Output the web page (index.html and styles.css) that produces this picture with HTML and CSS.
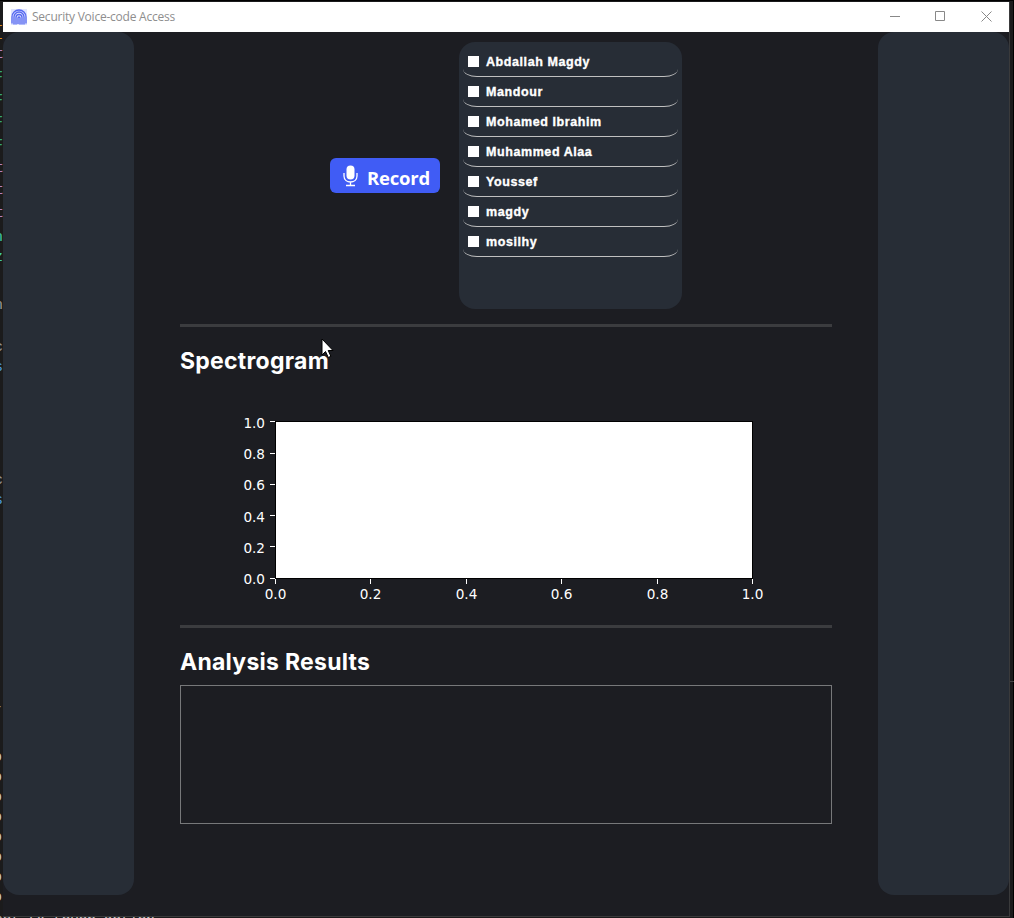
FILE: index.html
```html
<!DOCTYPE html>
<html lang="en">
<head>
<meta charset="utf-8">
<title>Security Voice-code Access</title>
<link rel="stylesheet" href="styles.css">
</head>
<body>
<div class="desktop">
  <svg class="editor" width="1014" height="918">
    <path class="guide" d="M1009 681.5h5"/>
    <g class="code">
      <text class="orange" x="-6" y="36">{</text>
      <text class="purple" x="-5" y="58">t</text>
      <text class="green" x="-6" y="81">F</text>
      <text class="green" x="-6" y="104">F</text>
      <text class="green" x="-6" y="126">F</text>
      <text class="green" x="-6" y="149">F</text>
      <text class="purple" x="-5" y="172">t</text>
      <text class="purple" x="-5" y="194">t</text>
      <text class="purple" x="-5" y="217">t</text>
      <text class="teal" x="-6" y="241">n</text>
      <text class="teal" x="-6" y="261">z</text>
      <text class="grey" x="-6" y="309">n</text>
      <text class="grey" x="-6" y="351">c</text>
      <text class="blue" x="-6" y="371">s</text>
      <text class="grey" x="-6" y="484">c</text>
      <text class="blue" x="-6" y="504">s</text>
      <text class="grey" x="-6" y="711">-</text>
      <text class="light" x="-7" y="761">o</text>
      <text class="light" x="-7" y="781">o</text>
      <text class="light" x="-7" y="801">o</text>
      <text class="light" x="-7" y="821">o</text>
      <text class="light" x="-7" y="841">o</text>
      <text class="light" x="-7" y="861">o</text>
      <text class="light" x="-7" y="881">o</text>
      <text class="light" x="-7" y="901">o</text>
      <text class="light" x="-6" y="924" textLength="161">set tx touch-action</text>
    </g>
  </svg>

  <div class="window">
    <header class="titlebar">
      <svg class="app-icon" width="16" height="16" viewBox="0 0 16 16">
        <path d="M1 14.5V8a7 7 0 0 1 14 0v6.500M3 15.500V8a5 5 0 0 1 10 0v7.500M5 15.500V8.500a3 3 0 0 1 6 0v7M7 15V9a1 1 0 0 1 2 0v6.500"/>
      </svg>
      <span class="title">Security Voice-code Access</span>
      <div class="controls">
        <svg width="45" height="29"><path d="M17 14.500h10"/></svg>
        <svg width="46" height="29"><path d="M17.500 9.500h9v9h-9z"/></svg>
        <svg width="45" height="29"><path d="M17.500 9.500l10 10M27.500 9.500l-10 10"/></svg>
      </div>
    </header>
    <div class="body">
      <aside class="side"></aside>
      <main class="main">
        <section class="top">
          <button class="record">
            <svg width="16" height="22" viewBox="0 0 16 22">
              <rect x="4.500" y="0.500" width="8" height="14" rx="4" fill="#fff"/>
              <path d="M2 8v3c0 8 13 8 13 0V8M8.500 17v3.500M4 20.500h9" fill="none" stroke="#fff" stroke-width="1.300"/>
            </svg>
            <span>Record</span>
          </button>
          <ul class="users">
            <li><i class="box"></i><span>Abdallah Magdy</span></li>
            <li><i class="box"></i><span>Mandour</span></li>
            <li><i class="box"></i><span>Mohamed Ibrahim</span></li>
            <li><i class="box"></i><span>Muhammed Alaa</span></li>
            <li><i class="box"></i><span>Youssef</span></li>
            <li><i class="box"></i><span>magdy</span></li>
            <li><i class="box"></i><span>mosilhy</span></li>
          </ul>
        </section>
        <section class="panel spectrogram">
          <h2>Spectrogram</h2>
          <svg class="chart" width="652" height="240">
            <rect x="95.500" y="41.500" width="477" height="157" fill="#fff" stroke="#000"/>
            <path class="ticks" d="M90 41.500h5M90 73.500h5M90 104.500h5M90 135.500h5M90 166.500h5M90 198.500h5M95.500 199v5M190.500 199v5M286.500 199v5M381.500 199v5M477.500 199v5M572.500 199v5"/>
            <g class="ylab">
              <text x="85" y="48">1.0</text>
              <text x="85" y="79">0.8</text>
              <text x="85" y="110">0.6</text>
              <text x="85" y="142">0.4</text>
              <text x="85" y="173">0.2</text>
              <text x="85" y="204">0.0</text>
            </g>
            <g class="xlab">
              <text x="95.500" y="219">0.0</text>
              <text x="190.500" y="219">0.2</text>
              <text x="286.500" y="219">0.4</text>
              <text x="381.500" y="219">0.6</text>
              <text x="477.500" y="219">0.8</text>
              <text x="572.500" y="219">1.0</text>
            </g>
          </svg>
        </section>
        <section class="panel analysis">
          <h2>Analysis Results</h2>
          <div class="results"></div>
        </section>
      </main>
      <aside class="side"></aside>
    </div>
  </div>

  <svg class="cursor" width="14" height="22" viewBox="0 0 14 22">
    <path d="M1 1v16l3.500-3.500 2.800 6 2.600-1.200-2.700-5.800H12z"/>
  </svg>
</div>
</body>
</html>
```
FILE: styles.css
```css
* { box-sizing: border-box; }
body { margin: 0; background: #000; }
.desktop {
  position: relative;
  width: 1014px;
  height: 918px;
  padding: 2px 0 0 3px;
  overflow: hidden;
  background: linear-gradient(90deg, #1b1b1c 1013px, #000 1013px);
  border-top: 1px solid #000;
}
.editor { position: absolute; left: 0; top: -1px; }
.code { font: 15px "Liberation Mono", monospace; }
.guide { stroke: #444; }
.orange { fill: #d9921e; }
.purple { fill: #b481c4; }
.green { fill: #35a878; }
.teal { fill: #3fc9a5; }
.grey { fill: #999; }
.blue { fill: #4c9be0; }
.light { fill: #c8c8c8; }

.window {
  position: relative;
  display: flex;
  flex-direction: column;
  width: 1007px;
  height: 915px;
  margin-top: -1px;
  background: #1c1d22;
  border-right: 1px solid #3a3a3b;
  border-bottom: 1px solid #3a3a3b;
}
.titlebar {
  display: flex;
  align-items: center;
  height: 30px;
  flex: none;
  padding: 0 0 1px 8px;
  background: #fff;
}
.app-icon { fill: none; stroke: #5568f0; stroke-width: 1.3; background: #dfe4ff; }
.title {
  margin-left: 5px;
  font: 12px "Open Sans", sans-serif;
  letter-spacing: -.23px;
  color: #8e8e8e;
}
.controls { display: flex; margin-left: auto; }
.controls svg { fill: none; stroke: #888; }

.body { display: flex; flex: 1; }
.side { width: 131px; height: 863px; border-radius: 16px; background: #272d36; }
.main { flex: 1; padding: 10px 46px 0; }
.top { display: flex; height: 282px; }
.record {
  display: flex;
  align-items: center;
  width: 110px;
  height: 35px;
  margin: 116px 19px 0 150px;
  padding: 0 0 0 12px;
  border: 0;
  border-radius: 6px;
  background: #405cf5;
  color: #fff;
  font: bold 18.5px/35px "Open Sans", sans-serif;
}
.record span { margin: 3px 0 0 9px; letter-spacing: -.2px; }
.users {
  width: 223px;
  height: 267px;
  margin: 0;
  padding: 5px 4px;
  list-style: none;
  border-radius: 16px;
  background: #272d36;
}
.users li {
  display: flex;
  align-items: center;
  height: 30px;
  padding-left: 5px;
  border-bottom: 1px solid #c0c0c0;
  border-radius: 0 0 14px 14px / 0 0 8px 8px;
  color: #fff;
  font: bold 12.500px/27px "Liberation Sans", sans-serif;
  letter-spacing: .58px;
  -webkit-text-stroke: .35px #fff;
}
.box { width: 11px; height: 11px; background: #fff; }
.users span { margin-left: 7px; padding-top: 2px; }

.panel { border-top: 3px solid #3b3c3f; }
.panel h2 {
  margin: 0;
  height: 53px;
  color: #fff;
  font: bold 23px/69px "Inter", sans-serif;
  letter-spacing: .26px;
}
.spectrogram { height: 301px; }
.chart { display: block; font: 13.600px "DejaVu Sans", sans-serif; fill: #fff; }
.ticks { stroke: #fff; }
.ylab { text-anchor: end; }
.xlab { text-anchor: middle; }
.analysis h2 { height: 57px; }
.results { height: 139px; border: 1px solid #77787a; }

.cursor { position: absolute; left: 321px; top: 337px; fill: #fff; stroke: #000; }
```
